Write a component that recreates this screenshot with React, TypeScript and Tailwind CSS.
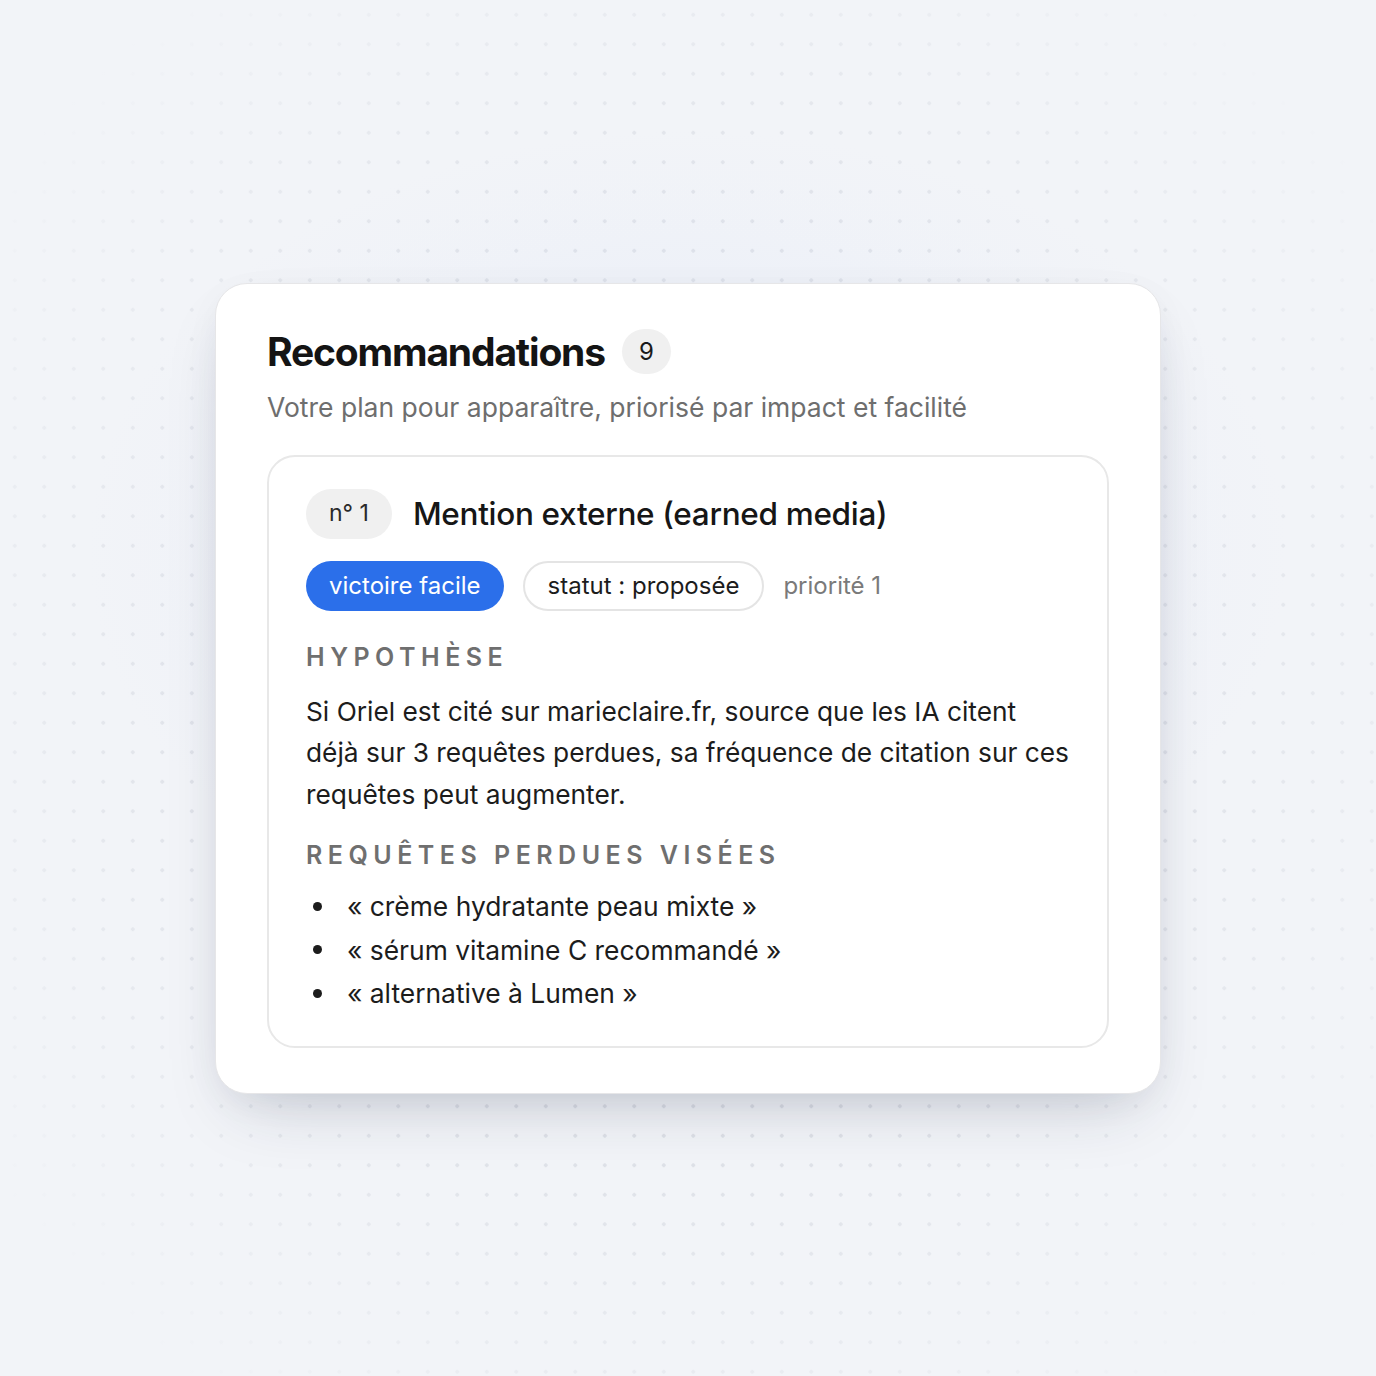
import React from 'react';

const queries = [
  '« crème hydratante peau mixte »',
  '« sérum vitamine C recommandé »',
  '« alternative à Lumen »',
];

const App: React.FC = () => {
  return (
    <div className="min-h-screen w-full flex items-center justify-center bg-[#f2f4f8] bg-[radial-gradient(circle_at_center,transparent_45%,#f2f4f8_88%),radial-gradient(ellipse_600px_420px_at_50%_40%,rgba(225,232,248,0.7),transparent),radial-gradient(circle,#dcdfe6_1.6px,transparent_2.1px)] bg-[size:100%_100%,100%_100%,29.5px_29.5px] bg-[position:0_0,0_0,0_0] font-['Inter','Noto_Sans',sans-serif]">
      {/* Carte principale */}
      <section className="w-[946px] bg-white rounded-[32px] border border-[#e6e6e8] shadow-[0_30px_70px_-25px_rgba(30,41,70,0.22),0_10px_40px_-10px_rgba(30,41,70,0.08)] px-[51px] pt-[44px] pb-[45px]">
        <div className="flex items-center gap-[17px]">
          <h1 className="text-[39px] leading-[48px] font-bold tracking-[-0.03em] text-[#141414]">Recommandations</h1>
          <span className="h-[45px] min-w-[49px] px-3 rounded-full bg-[#f0f0f0] flex items-center justify-center text-[24px] text-[#1a1a1a]">9</span>
        </div>
        <p className="mt-[14px] text-[26.5px] leading-[34px] text-[#6e6e6e]">
          Votre plan pour apparaître, priorisé par impact et facilité
        </p>

        <div className="mt-[31px] rounded-[28px] border-2 border-[#e8e8e8] pl-[37px] pr-[33px] pt-[32px] pb-[31px]">
          <div className="flex items-center gap-[21px]">
            <span className="h-[50px] px-[23px] rounded-full bg-[#f0f0f0] flex items-center text-[23px] text-[#2a2a2a]">n° 1</span>
            <h2 className="text-[31.5px] leading-[40px] font-medium text-[#161616] tracking-[-0.01em]">Mention externe (earned media)</h2>
          </div>

          <div className="mt-[22px] flex items-center gap-[19px]">
            <span className="h-[50px] px-[23px] rounded-full bg-[#2b6fea] text-white flex items-center text-[24px]">victoire facile</span>
            <span className="h-[50px] px-[23px] rounded-full border-2 border-[#e4e4e4] text-[#1c1c1c] flex items-center text-[24px]">statut : proposée</span>
            <span className="text-[24px] text-[#7a7a7a]">priorité 1</span>
          </div>

          <h3 className="mt-[30px] text-[25px] leading-[32px] font-semibold tracking-[0.22em] text-[#6f6f6f]">HYPOTHÈSE</h3>
          <p className="mt-[18px] text-[26.3px] leading-[41.5px] text-[#1c1c1c]">
            Si Oriel est cité sur marieclaire.fr, source que les IA citent déjà sur 3 requêtes perdues, sa fréquence de citation sur ces requêtes peut augmenter.
          </p>

          <h3 className="mt-[24px] text-[25px] leading-[32px] font-semibold tracking-[0.22em] text-[#6f6f6f]">REQUÊTES PERDUES VISÉES</h3>
          <ul className="mt-[14px] flex flex-col gap-[1px]">
            {queries.map((q) => (
              <li key={q} className="flex items-center text-[26.4px] leading-[42.5px] text-[#1c1c1c]">
                <span className="w-[9px] h-[9px] rounded-full bg-[#1c1c1c] ml-[7px] mr-[25px] shrink-0"></span>
                {q}
              </li>
            ))}
          </ul>
        </div>
      </section>
    </div>
  );
};

export default App;
